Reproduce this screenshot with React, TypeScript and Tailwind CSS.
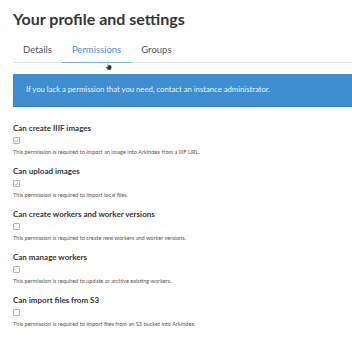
import React from 'react';

interface Permission {
  label: string;
  help: string;
  granted: boolean;
}

const permissions: Permission[] = [
  { label: 'Can create IIIF images', help: 'This permission is required to import an image into Arkindex from a IIIF URL.', granted: true },
  { label: 'Can upload images', help: 'This permission is required to import local files.', granted: true },
  { label: 'Can create workers and worker versions', help: 'This permission is required to create new workers and worker versions.', granted: false },
  { label: 'Can manage workers', help: 'This permission is required to update or archive existing workers.', granted: false },
  { label: 'Can import files from S3', help: 'This permission is required to import files from an S3 bucket into Arkindex.', granted: false },
];

const Checkbox: React.FC<{ checked: boolean }> = ({ checked }) => (
  <div className="w-[7px] h-[7px] border border-[#b5b5b5] rounded-[1px] bg-[#fafafa] flex items-center justify-center">
    {checked && (
      <svg viewBox="0 0 8 8" className="w-[6px] h-[6px]">
        <path d="M1.2 4.2 L3.2 6 L6.8 1.8" fill="none" stroke="#9a9a9a" strokeWidth="1.3" />
      </svg>
    )}
  </div>
);

export default function App() {
  return (
    <div className="relative w-[352px] h-[344px] overflow-hidden bg-white text-[#4a4a4a]" style={{ fontFamily: '"Lato", "Liberation Sans", sans-serif' }}>
      <div className="pl-[13px] pt-[8px]">
        <h1 className="text-[16px] leading-[22px] font-bold text-[#363636]">Your profile and settings</h1>

        {/* Tabs */}
        <div className="mt-[8px] flex border-b border-[#e4e4e4] text-[9.5px] leading-[12px]">
          <div className="px-[10px] pt-[6px] pb-[6px] text-[#555]">Details</div>
          <div className="px-[10px] pt-[6px] pb-[6px] text-[#4a8fd6] border-b border-[#7aaee0] -mb-px">Permissions</div>
          <div className="px-[10px] pt-[6px] pb-[6px] text-[#555]">Groups</div>
        </div>

        {/* Notification */}
        <div className="mt-[11px] w-[360px] h-[33px] bg-[#3e8ed0] border-b border-[#2f7cc0] flex items-center pl-[13px] text-[7.7px] text-[#eaf3fb]">
          If you lack a permission that you need, contact an instance administrator.
        </div>

        {/* Permissions */}
        <div className="mt-[16px] flex flex-col gap-[10px]">
          {permissions.map((p) => (
            <div key={p.label} className="flex flex-col">
              <div className="text-[8px] leading-[10px] font-bold text-[#363636]">{p.label}</div>
              <div className="mt-[4px]">
                <Checkbox checked={p.granted} />
              </div>
              <div className="mt-[4px] text-[5.6px] leading-[8px] text-[#555]">{p.help}</div>
            </div>
          ))}
        </div>
      </div>

      {/* mouse cursor */}
      <svg viewBox="0 0 10 12" className="absolute left-[105px] top-[61px] w-[8px] h-[10px]">
        <path d="M3 0.5 L4 0.5 L4 5 L5 4.5 L6 4.7 L7 5 L8 5.5 L8.5 8 L7.5 11 L3.5 11 L1 7.5 L1.5 6.8 L3 7.5 Z" fill="#333" stroke="#fff" strokeWidth="0.6" />
      </svg>
    </div>
  );
}
